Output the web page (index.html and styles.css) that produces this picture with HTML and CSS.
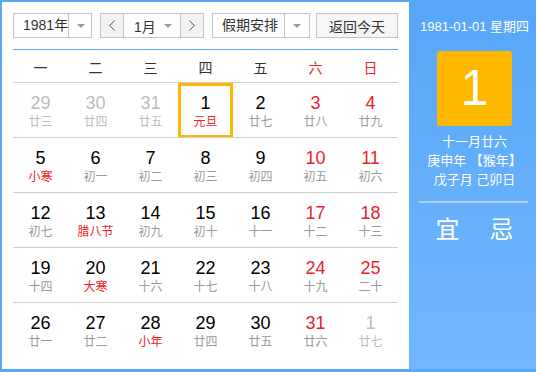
FILE: index.html
```html
<!DOCTYPE html>
<html lang="zh-CN">
    <head>
        <meta charset="UTF-8" />
        <title>万年历</title>
        <link rel="stylesheet" href="styles.css">
    </head>
    <body>
        <div class="calendar">
            <div class="main">
                <div class="toolbar">
                    <div class="select year-select">
                        <span class="select-text">1981年</span>
                        <span class="select-arrow"><i class="caret"></i></span>
                    </div>
                    <div class="month-group">
                        <span class="nav-btn">
                            <svg width="6" height="11" viewBox="0 0 6 11"><polyline points="5.5,0.5 0.8,5.5 5.5,10.5" fill="none" stroke="#555" stroke-width="1"/></svg>
                        </span>
                        <span class="month-text">1月<i class="caret"></i></span>
                        <span class="nav-btn">
                            <svg width="6" height="11" viewBox="0 0 6 11"><polyline points="0.5,0.5 5.2,5.5 0.5,10.5" fill="none" stroke="#555" stroke-width="1"/></svg>
                        </span>
                    </div>
                    <div class="select holiday-select">
                        <span class="select-text">假期安排</span>
                        <span class="select-arrow"><i class="caret"></i></span>
                    </div>
                    <button class="today-btn">返回今天</button>
                </div>

                <div class="week-head">
                    <span>一</span>
                    <span>二</span>
                    <span>三</span>
                    <span>四</span>
                    <span>五</span>
                    <span class="weekend">六</span>
                    <span class="weekend">日</span>
                </div>

                <div class="days">
                    <div class="day other"><b>29</b><small>廿三</small></div>
                    <div class="day other"><b>30</b><small>廿四</small></div>
                    <div class="day other"><b>31</b><small>廿五</small></div>
                    <div class="day selected"><b>1</b><small class="fest">元旦</small></div>
                    <div class="day"><b>2</b><small>廿七</small></div>
                    <div class="day weekend"><b>3</b><small>廿八</small></div>
                    <div class="day weekend"><b>4</b><small>廿九</small></div>

                    <div class="day"><b>5</b><small class="fest">小寒</small></div>
                    <div class="day"><b>6</b><small>初一</small></div>
                    <div class="day"><b>7</b><small>初二</small></div>
                    <div class="day"><b>8</b><small>初三</small></div>
                    <div class="day"><b>9</b><small>初四</small></div>
                    <div class="day weekend"><b>10</b><small>初五</small></div>
                    <div class="day weekend"><b>11</b><small>初六</small></div>

                    <div class="day"><b>12</b><small>初七</small></div>
                    <div class="day"><b>13</b><small class="fest">腊八节</small></div>
                    <div class="day"><b>14</b><small>初九</small></div>
                    <div class="day"><b>15</b><small>初十</small></div>
                    <div class="day"><b>16</b><small>十一</small></div>
                    <div class="day weekend"><b>17</b><small>十二</small></div>
                    <div class="day weekend"><b>18</b><small>十三</small></div>

                    <div class="day"><b>19</b><small>十四</small></div>
                    <div class="day"><b>20</b><small class="fest">大寒</small></div>
                    <div class="day"><b>21</b><small>十六</small></div>
                    <div class="day"><b>22</b><small>十七</small></div>
                    <div class="day"><b>23</b><small>十八</small></div>
                    <div class="day weekend"><b>24</b><small>十九</small></div>
                    <div class="day weekend"><b>25</b><small>二十</small></div>

                    <div class="day last"><b>26</b><small>廿一</small></div>
                    <div class="day last"><b>27</b><small>廿二</small></div>
                    <div class="day last"><b>28</b><small class="fest">小年</small></div>
                    <div class="day last"><b>29</b><small>廿四</small></div>
                    <div class="day last"><b>30</b><small>廿五</small></div>
                    <div class="day last weekend"><b>31</b><small>廿六</small></div>
                    <div class="day last other"><b>1</b><small>廿七</small></div>
                </div>
            </div>

            <div class="side">
                <div class="side-date">1981-01-01 星期四</div>
                <div class="side-day">1</div>
                <div class="side-lunar">
                    十一月廿六<br />
                    庚申年 【猴年】<br />
                    戊子月 己卯日
                </div>
                <div class="side-line"></div>
                <div class="side-yiji">
                    <span>宜</span>
                    <span>忌</span>
                </div>
            </div>
        </div>
    </body>
</html>
```

FILE: styles.css
```css
body {
    margin: 0;
    font-family: "Liberation Sans", "Noto Sans CJK SC", sans-serif;
    color: #333;
}
.calendar {
    display: flex;
    width: 536px;
    height: 372px;
    box-sizing: border-box;
    border: 2px solid #5aa8f5;
    border-bottom-width: 3px;
    border-right: none;
}
.main {
    width: 407px;
    flex-shrink: 0;
    box-sizing: border-box;
    padding: 11px 11px 0;
    background: #fff;
}
.toolbar {
    display: flex;
    height: 25px;
    font-size: 14px;
    white-space: nowrap;
}
.select,
.month-group,
.today-btn {
    display: flex;
    height: 25px;
    box-sizing: border-box;
    border: 1px solid #c4c4c4;
    background: #fff;
}
.select-text {
    flex: 1;
    line-height: 23px;
    padding-left: 9px;
}
.select-arrow {
    width: 24px;
    flex-shrink: 0;
    border-left: 1px solid #c4c4c4;
    display: flex;
    align-items: center;
    justify-content: center;
}
.caret {
    display: inline-block;
    width: 0;
    height: 0;
    border-left: 4px solid transparent;
    border-right: 4px solid transparent;
    border-top: 4px solid #9a9a9a;
}
.year-select {
    width: 79px;
}
.month-group {
    width: 104px;
    margin-left: 8px;
}
.nav-btn {
    width: 22px;
    background: #f3f3f3;
    display: flex;
    align-items: center;
    justify-content: center;
}
.month-text {
    flex: 1;
    border-left: 1px solid #c4c4c4;
    border-right: 1px solid #c4c4c4;
    display: flex;
    align-items: center;
    justify-content: space-between;
    padding: 0 8px 0 10px;
}
.holiday-select {
    width: 98px;
    margin-left: 8px;
}
.today-btn {
    width: 82px;
    margin-left: auto;
    padding: 0;
    background: #f6f6f6;
    font: inherit;
    color: #333;
    justify-content: center;
    align-items: center;
}
.week-head {
    display: grid;
    grid-template-columns: repeat(7, 55px);
    margin-top: 11px;
    height: 34px;
    box-sizing: border-box;
    border-top: 1px solid #5aa8f5;
    border-bottom: 1px solid #cfcfcf;
    padding-top: 11px;
    font-size: 14px;
    line-height: 14px;
    text-align: center;
}
.week-head .weekend {
    color: #e8232a;
}
.days {
    display: grid;
    grid-template-columns: repeat(7, 55px);
}
.day {
    height: 55px;
    box-sizing: border-box;
    border-bottom: 1px solid #cfcfcf;
    padding-top: 10px;
    text-align: center;
}
.day.last {
    border-bottom: none;
}
.day b {
    display: block;
    font-weight: normal;
    font-size: 18px;
    line-height: 20px;
    color: #000;
}
.day small {
    display: block;
    font-size: 12px;
    line-height: 18px;
    color: #999;
}
.day.weekend b {
    color: #e8232a;
}
.day.other b {
    color: #bcbcbc;
}
.day.other small {
    color: #bcbcbc;
}
.day small.fest {
    color: #ee1c25;
}
.day.selected {
    position: relative;
    box-shadow: inset 0 0 0 3px #ffb600;
    border-bottom: none;
}
.day.selected::after {
    content: "";
    position: absolute;
    left: 0;
    right: 0;
    bottom: 0;
    border-bottom: 1px solid #cfcfcf;
}
.side {
    flex: 1;
    padding: 16px 0 0 4px;
    background: linear-gradient(#57a6f8, #72b7fd);
    color: #fff;
    text-align: center;
}
.side-date {
    font-size: 13px;
    line-height: 18px;
}
.side-day {
    width: 75px;
    height: 75px;
    margin: 15px auto 0;
    background: #ffb800;
    border-radius: 3px;
    font-size: 50px;
    line-height: 75px;
}
.side-lunar {
    margin-top: 6px;
    font-size: 13px;
    line-height: 19px;
}
.side-line {
    height: 2px;
    margin: 12px 8px 0 6px;
    background: rgba(255, 255, 255, 0.45);
}
.side-yiji {
    display: flex;
    justify-content: center;
    gap: 30px;
    margin-top: 12px;
    font-size: 24px;
    line-height: 30px;
}
```
